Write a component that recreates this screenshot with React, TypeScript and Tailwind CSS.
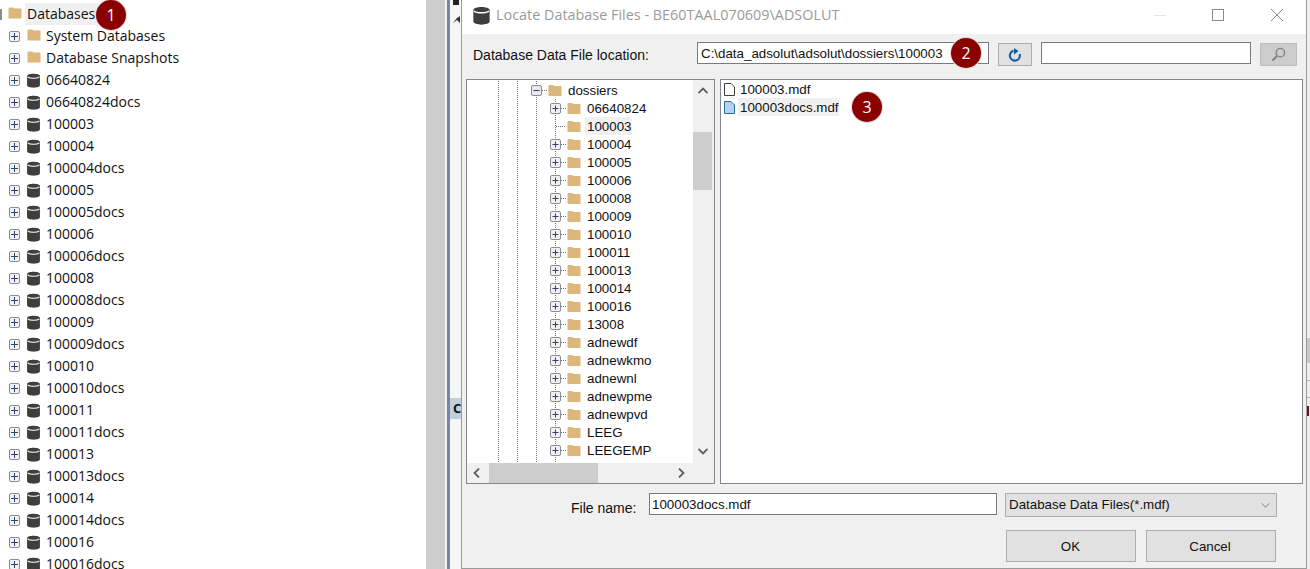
import React from "react";

const leftRows = [
  "06640824", "06640824docs", "100003", "100004", "100004docs", "100005", "100005docs",
  "100006", "100006docs", "100008", "100008docs", "100009", "100009docs", "100010",
  "100010docs", "100011", "100011docs", "100013", "100013docs", "100014", "100014docs",
  "100016", "100016docs",
];

const dialogRows = [
  "06640824", "100003", "100004", "100005", "100006", "100008", "100009", "100010", "100011",
  "100013", "100014", "100016", "13008", "adnewdf", "adnewkmo", "adnewnl", "adnewpme",
  "adnewpvd", "LEEG", "LEEGEMP", "",
];

function FolderIcon({ className = "" }: { className?: string }) {
  return (
    <svg viewBox="0 0 14 12" className={"shrink-0 " + className}>
      <path d="M0.5 1.5 Q0.5 0.5 1.5 0.5 H5 L6.5 1.5 H13 Q13.5 1.5 13.5 2.5 V11.5 H0.5 Z" fill="#dcb67a" />
    </svg>
  );
}

function DbIcon({ className = "" }: { className?: string }) {
  return (
    <svg viewBox="0 0 14 14" className={"shrink-0 " + className}>
      <path d="M1 3 C1 0 13 0 13 3 V11.5 C13 14.5 1 14.5 1 11.5 Z" fill="#3e3e3e" />
      <path d="M1.5 3.6 C3.5 5.4 10.5 5.4 12.5 3.6" fill="none" stroke="#ffffff" strokeWidth="1" />
    </svg>
  );
}

function PlusBox() {
  return (
    <span className="flex h-[11px] w-[11px] shrink-0 items-center justify-center rounded-[2px] border border-[#8c8c8c] bg-[#f1f1f4]">
      <svg viewBox="0 0 7 7" className="h-[7px] w-[7px]">
        <path d="M0 3.5 H7 M3.5 0 V7" stroke="#2d4373" strokeWidth="1" />
      </svg>
    </span>
  );
}

function LeftRow({ label, db }: { label: string; db?: boolean }) {
  return (
    <div className="flex h-[22px] items-center pl-[9px]">
      <PlusBox />
      {db ? (
        <DbIcon className="ml-[6px] h-[15px] w-[15px]" />
      ) : (
        <FolderIcon className="ml-[7px] -mt-[3px] h-[12px] w-[14px]" />
      )}
      <span className="ml-[5px] -mt-[2px] font-['Open_Sans',sans-serif] text-[14px] text-[#111]">{label}</span>
    </div>
  );
}

// dotted guides and expander of one row of the dialog's tree, x=0 is 498 on the page
function Guides({ kind }: { kind: "root" | "child" | "leaf" }) {
  const dots = { stroke: "#6f6f6f", strokeDasharray: "1 1", strokeWidth: 1, fill: "none" };
  return (
    <svg width="69" height="18" className="shrink-0">
      <path d="M0.5 0 V18 M19.5 0 V18" {...dots} />
      {kind === "root" ? (
        <>
          <path d="M38.5 0 V18 M44 9.5 H50" {...dots} />
          <rect x="33.5" y="4.5" width="10" height="10" rx="1.5" fill="#e8e8ee" stroke="#8c8c8c" />
          <path d="M35.5 9.5 H41.5" stroke="#2d4373" />
        </>
      ) : (
        <>
          <path d="M38.5 0 V18 M57.5 0 V18" {...dots} />
          {kind === "child" ? (
            <>
              <path d="M63 9.5 H68" {...dots} />
              <rect x="52.5" y="4.5" width="10" height="10" rx="1.5" fill="#f1f1f4" stroke="#8c8c8c" />
              <path d="M54.5 9.5 H60.5 M57.5 6.5 V12.5" stroke="#2d4373" />
            </>
          ) : (
            <path d="M58 9.5 H68" {...dots} />
          )}
        </>
      )}
    </svg>
  );
}

function Chevron({ d, className = "" }: { d: string; className?: string }) {
  return (
    <svg viewBox="0 0 10 10" className={"h-[10px] w-[10px] " + className}>
      <path d={d} fill="none" stroke="#5f5f5f" strokeWidth="1.8" />
    </svg>
  );
}

function Badge({ n, className }: { n: number; className: string }) {
  return (
    <span
      className={
        "absolute flex h-[30px] w-[30px] items-center justify-center rounded-full bg-[#8a0000] font-['Open_Sans',sans-serif] text-[16px] text-white shadow-[0_0_0_1px_#e8d8d8] " +
        className
      }
    >
      {n}
    </span>
  );
}

export default function App() {
  return (
    <div className="relative flex h-[569px] w-[1310px] overflow-hidden bg-white font-['Liberation_Sans',sans-serif] text-[13.33px] text-[#111]">
      {/* object explorer */}
      <div className="w-[426px] shrink-0 overflow-hidden pt-[3px]">
        <div className="flex h-[22px] items-center">
          <span className="h-[11px] w-[2px] bg-[#8c8c8c]" />
          <FolderIcon className="ml-[6px] -mt-[3px] h-[12px] w-[14px]" />
          <span className="ml-[3px] flex h-[22px] w-[73px] items-center bg-[#f0f0f0] pb-[2px] pl-[2px] font-['Open_Sans',sans-serif] text-[14px]">
            Databases
          </span>
        </div>
        <LeftRow label="System Databases" />
        <LeftRow label="Database Snapshots" />
        {leftRows.map((r) => (
          <LeftRow key={r} label={r} db />
        ))}
      </div>

      <div className="w-[19px] shrink-0 bg-[#cdcdcd]" />
      <div className="w-[2px] shrink-0 bg-[#f0f0f0]" />
      <div className="w-[3px] shrink-0 bg-[#76869e]" />

      {/* strip of the main window between the panes */}
      <div className="flex w-[11px] shrink-0 flex-col overflow-hidden bg-[#f6f6f6]">
        <div className="h-[5px] w-[6px] ml-[3px] bg-[#222]" />
        <svg viewBox="0 0 11 10" className="mt-[10px] h-[10px] w-[11px]">
          <path d="M3 8 L7 3 L10 1 V8 L7 5 Z" fill="#333" />
        </svg>
        <div className="mt-[373px] flex h-[21px] items-center bg-[#c0cfdc] pl-[3px] font-['Open_Sans',sans-serif] text-[13px] font-bold">
          C
        </div>
      </div>

      {/* dialog */}
      <div className="flex w-[846px] shrink-0 flex-col border-x border-b border-[#9a9a9a] bg-[#f0f0f0]">
        <div className="flex h-[34px] shrink-0 items-center bg-white pb-[4px] pl-[10px]">
          <DbIcon className="h-[19px] w-[19px]" />
          <span className="ml-[5px] font-['Open_Sans',sans-serif] text-[14.4px] text-[#9b9b9b]">
            Locate Database Files - BE60TAAL070609\ADSOLUT
          </span>
          <span className="ml-auto h-px w-[12px] bg-[#e4e4e4]" />
          <span className="ml-[46px] h-[12px] w-[12px] border border-[#8a8a8a]" />
          <svg viewBox="0 0 12 12" className="ml-[47px] mr-[23px] h-[12px] w-[12px]">
            <path d="M0 0 L12 12 M12 0 L0 12" stroke="#8a8a8a" strokeWidth="1" />
          </svg>
        </div>

        <div className="flex h-[45px] shrink-0 items-start pl-[11px] pt-[8px]">
          <span className="flex h-[26px] w-[224px] shrink-0 items-center text-[14px]">Database Data File location:</span>
          <div className="flex h-[22px] w-[292px] shrink-0 items-center overflow-hidden border border-[#7a7a7a] bg-white pl-[3px] pt-[2px] whitespace-nowrap">
            C:\data_adsolut\adsolut\dossiers\100003
          </div>
          <button className="ml-[9px] mt-px flex h-[23px] w-[34px] shrink-0 items-center justify-center border border-[#adadad] bg-[#e1e1e1]">
            <svg viewBox="0 0 14 14" className="h-[14px] w-[14px]">
              <path d="M5.5 2.8 A5 5 0 1 0 11.6 6" fill="none" stroke="#0f5c9f" strokeWidth="2" />
              <path d="M6 0 L10.5 3 L6 6.5 Z" fill="#0f5c9f" />
            </svg>
          </button>
          <div className="ml-[9px] h-[22px] w-[210px] shrink-0 border border-[#7a7a7a] bg-white" />
          <button className="ml-[9px] mt-px flex h-[23px] w-[37px] shrink-0 items-center justify-center border border-[#bdbdbd] bg-[#cccccc]">
            <svg viewBox="0 0 16 16" className="h-[15px] w-[15px]">
              <circle cx="10" cy="6" r="4.5" fill="none" stroke="#838383" strokeWidth="1.5" />
              <path d="M6.5 9.5 L1.5 14.5" stroke="#838383" strokeWidth="2.2" />
            </svg>
          </button>
        </div>

        <div className="flex h-[405px] shrink-0 pl-[4px]">
          <div className="flex w-[249px] shrink-0 flex-col border border-[#82878f] bg-white">
            <div className="flex min-h-0 flex-1">
              <div className="min-w-0 flex-1 overflow-hidden pl-[31px] pt-px">
                <div className="flex h-[18px] items-center">
                  <Guides kind="root" />
                  <FolderIcon className="-ml-[19px] h-[13px] w-[14px]" />
                  <span className="ml-[6px] pt-[2px]">dossiers</span>
                </div>
                {dialogRows.map((r) => (
                  <div key={r || "next"} className="flex h-[18px] items-center">
                    <Guides kind={r === "100003" ? "leaf" : "child"} />
                    <FolderIcon className="h-[13px] w-[14px]" />
                    {r === "100003" ? (
                      <span className="ml-[4px] flex h-[18px] items-center bg-[#f0f0f0] pl-[2px] pr-px pt-px">{r}</span>
                    ) : (
                      <span className="ml-[6px] pt-[2px]">{r}</span>
                    )}
                  </div>
                ))}
              </div>
              <div className="flex w-[21px] shrink-0 flex-col items-center bg-[#f0f0f0]">
                <Chevron d="M0.5 7 L5 2.5 L9.5 7" className="mr-[2px] mt-[6px]" />
                <div className="mt-[36px] h-[58px] w-[19px] self-start bg-[#cdcdcd]" />
                <Chevron d="M0.5 3 L5 7.5 L9.5 3" className="mr-[2px] mt-auto mb-[7px]" />
              </div>
            </div>
            <div className="flex h-[20px] shrink-0 items-center bg-[#f0f0f0]">
              <Chevron d="M7 0.5 L2.5 5 L7 9.5" className="ml-[5px]" />
              <div className="ml-[7px] h-[20px] w-[109px] bg-[#cdcdcd]" />
              <Chevron d="M3 0.5 L7.5 5 L3 9.5" className="ml-[78px]" />
            </div>
          </div>

          <div className="ml-[5px] w-[583px] shrink-0 border border-[#82878f] bg-white pl-[3px]">
            <div className="flex h-[18px] items-center">
              <svg viewBox="0 0 11 13" className="h-[13px] w-[11px] shrink-0">
                <path d="M0.5 0.5 H7 L10.5 4 V12.5 H0.5 Z" fill="#fff" stroke="#3c3c3c" />
              </svg>
              <span className="ml-[5px] pt-px">100003.mdf</span>
            </div>
            <div className="flex h-[18px] items-center">
              <svg viewBox="0 0 11 13" className="h-[13px] w-[11px] shrink-0">
                <path d="M0.5 0.5 H7 L10.5 4 V12.5 H0.5 Z" fill="#b5d3ee" stroke="#2f6a9f" />
              </svg>
              <span className="ml-[3px] flex h-[18px] items-center bg-[#f0f0f0] pl-[2px] pt-px">100003docs.mdf</span>
            </div>
          </div>
        </div>

        <div className="mt-[9px] flex h-[24px] shrink-0 items-start pl-[109px]">
          <span className="mt-[5px] w-[78px] shrink-0 text-[14px]">File name:</span>
          <div className="flex h-[22px] w-[348px] shrink-0 items-center border border-[#7a7a7a] bg-white pl-[2px] pt-[2px]">
            100003docs.mdf
          </div>
          <div className="ml-[8px] flex h-[24px] w-[272px] shrink-0 items-center justify-between border border-[#adadad] bg-[#e1e1e1] px-[3px]">
            <span>Database Data Files(*.mdf)</span>
            <svg viewBox="0 0 10 6" className="mr-[3px] h-[5px] w-[9px]">
              <path d="M0.5 0.5 L5 5 L9.5 0.5" fill="none" stroke="#6a6a6a" />
            </svg>
          </div>
        </div>

        <div className="mt-[13px] flex shrink-0 pl-[544px]">
          <button className="h-[32px] w-[130px] shrink-0 border border-[#adadad] bg-[#e1e1e1] pr-px pt-px">OK</button>
          <button className="ml-[10px] h-[32px] w-[130px] shrink-0 border border-[#adadad] bg-[#e1e1e1] pr-[2px] pt-px">Cancel</button>
        </div>
      </div>

      {/* what shows of the main window on the right */}
      <div className="flex w-[3px] shrink-0 flex-col bg-[#f0f0f0]">
        <div className="mt-[338px] h-[25px] bg-[#c8c8c8]" />
        <div className="mt-[17px] h-px bg-[#b0b0b0]" />
        <div className="mt-[16px] h-px bg-[#b0b0b0]" />
        <div className="mt-[8px] h-[10px] w-[2px] bg-[#7a1010]" />
      </div>

      <Badge n={1} className="left-[96px] top-0" />
      <Badge n={2} className="left-[951px] top-[38px]" />
      <Badge n={3} className="left-[852px] top-[92px]" />
    </div>
  );
}
